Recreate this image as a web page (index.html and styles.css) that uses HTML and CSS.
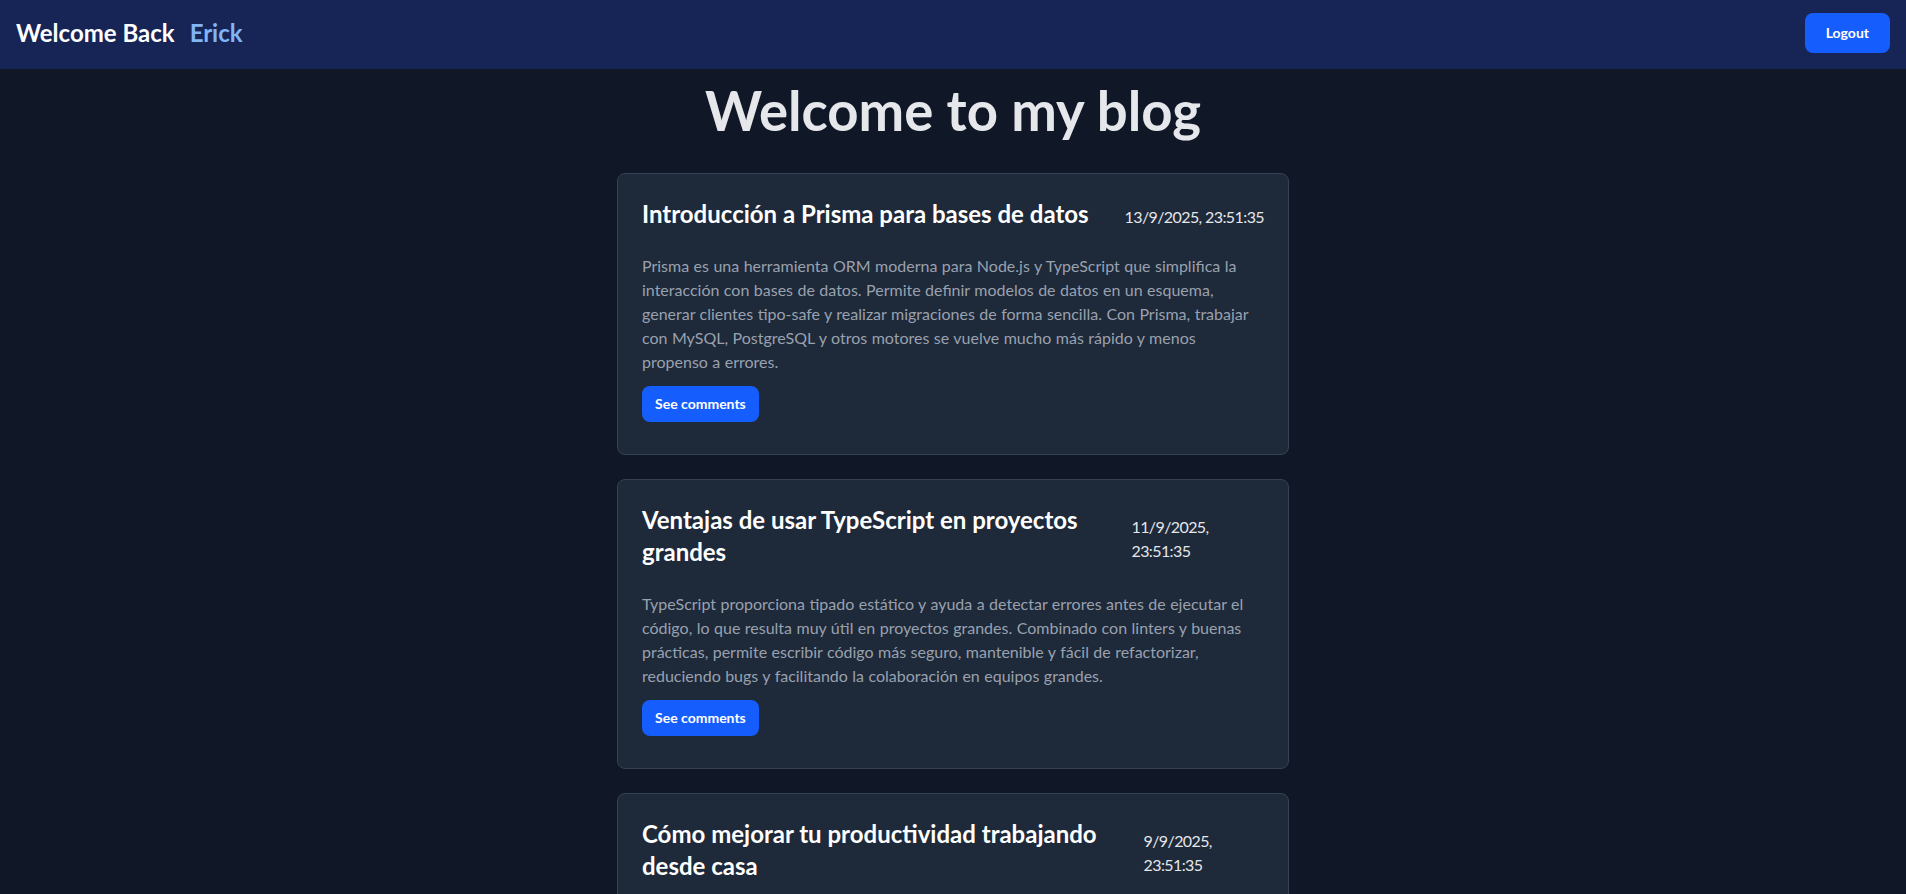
FILE: index.html
```html
<!DOCTYPE html>
<html lang="es">
<head>
<meta charset="utf-8">
<title>Blog</title>
<link rel="stylesheet" href="styles.css">
</head>
<body>
<header class="topbar">
  <h1 class="greeting">Welcome Back <span class="greeting-name">Erick</span></h1>
  <button class="btn btn-logout" type="button">Logout</button>
</header>
<main class="page">
  <h2 class="page-title">Welcome to my blog</h2>
  <section class="posts">
    <article class="post">
      <div class="post-head">
        <h3 class="post-title">Introducción a Prisma para bases de datos</h3>
        <p class="post-date">13/9/2025, 23:51:35</p>
      </div>
      <p class="post-body">Prisma es una herramienta ORM moderna para Node.js y TypeScript que simplifica la interacción con bases de datos. Permite definir modelos de datos en un esquema, generar clientes tipo-safe y realizar migraciones de forma sencilla. Con Prisma, trabajar con MySQL, PostgreSQL y otros motores se vuelve mucho más rápido y menos propenso a errores.</p>
      <div class="post-actions"><button class="btn btn-comments" type="button">See comments</button></div>
    </article>
    <article class="post">
      <div class="post-head">
        <h3 class="post-title">Ventajas de usar TypeScript en proyectos grandes</h3>
        <p class="post-date">11/9/2025, 23:51:35</p>
      </div>
      <p class="post-body">TypeScript proporciona tipado estático y ayuda a detectar errores antes de ejecutar el código, lo que resulta muy útil en proyectos grandes. Combinado con linters y buenas prácticas, permite escribir código más seguro, mantenible y fácil de refactorizar, reduciendo bugs y facilitando la colaboración en equipos grandes.</p>
      <div class="post-actions"><button class="btn btn-comments" type="button">See comments</button></div>
    </article>
    <article class="post">
      <div class="post-head">
        <h3 class="post-title">Cómo mejorar tu productividad trabajando desde casa</h3>
        <p class="post-date">9/9/2025, 23:51:35</p>
      </div>
      <p class="post-body">Trabajar desde casa requiere disciplina y una buena organización. Establecer un horario fijo, tener un espacio de trabajo dedicado y tomar descansos regulares ayuda a mantener la concentración y evitar el agotamiento.</p>
      <div class="post-actions"><button class="btn btn-comments" type="button">See comments</button></div>
    </article>
  </section>
</main>
</body>
</html>
```
FILE: styles.css
```css
html, body {
  margin: 0;
  padding: 0;
}
html {
  scrollbar-width: none;
}
body {
  background: #101828;
  font-family: Lato, "Open Sans", sans-serif;
  color: #e5e7eb;
}

.topbar {
  display: flex;
  align-items: center;
  justify-content: space-between;
  height: 69px;
  box-sizing: border-box;
  padding: 13px 16px 16px;
  background: #162456;
}
.greeting {
  margin: 0;
  font-size: 24px;
  line-height: 32px;
  font-weight: 700;
  color: #ffffff;
  display: flex;
  gap: 15px;
}
.greeting-name {
  color: #80b6f6;
}

.btn {
  font-family: inherit;
  border: 0;
  cursor: pointer;
  background: #155dfc;
  color: #ffffff;
  font-weight: 700;
  font-size: 14px;
  line-height: 20px;
  border-radius: 8px;
}
.btn-logout {
  height: 40px;
  padding: 0 21px;
}
.btn-comments {
  height: 36px;
  padding: 0 13px;
}

.page {
  padding-top: 14px;
}
.page-title {
  margin: 0 0 36px;
  text-align: center;
  font-size: 54.5px;
  line-height: 54px;
  font-weight: 700;
  color: #e5e7eb;
}

.posts {
  width: 672px;
  margin: 0 auto;
  display: flex;
  flex-direction: column;
  gap: 24px;
}
.post {
  background: #1e2939;
  border: 1px solid #364153;
  border-radius: 8px;
  padding: 24px 24px 32px;
}
.post-head {
  display: flex;
  align-items: center;
  justify-content: space-between;
  gap: 16px;
}
.post-title {
  margin: 0;
  font-size: 24px;
  line-height: 32px;
  font-weight: 700;
  color: #ffffff;
  flex: 0 1 auto;
}
.post-date {
  margin: 6px 0 0;
  font-size: 16px;
  line-height: 24px;
  letter-spacing: -0.6px;
  color: #e5e7eb;
  flex: 0 0.5 auto;
}
.post-body {
  margin: 24px 0 12px;
  font-size: 16px;
  line-height: 24px;
  word-spacing: 0.35px;
  color: #99a1af;
}
.post-actions {
  display: flex;
}
```
